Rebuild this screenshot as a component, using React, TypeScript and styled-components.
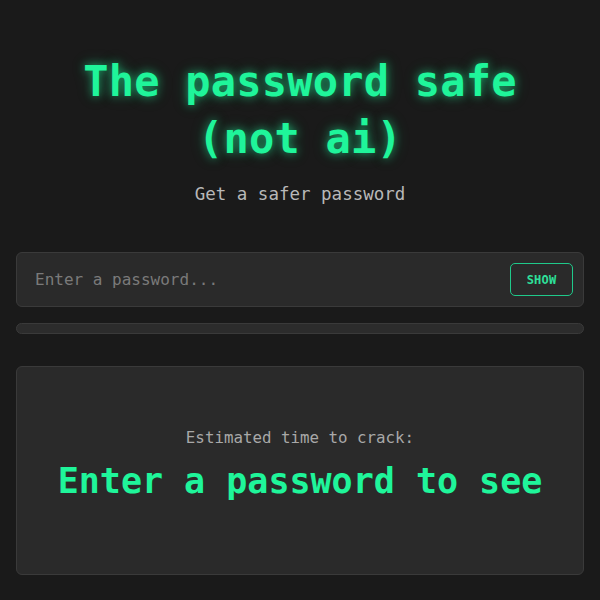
import React from "react";
import styled, { createGlobalStyle } from "styled-components";

const Global = createGlobalStyle`
  html, body { margin: 0; padding: 0; background: #1a1a1a; }
  body { font-family: "DejaVu Sans Mono", "Liberation Mono", monospace; }
  * { box-sizing: border-box; }
`;

const Page = styled.main`
  width: 600px;
  min-height: 600px;
  padding: 53px 16px 24px;
  display: flex;
  flex-direction: column;
`;

const Title = styled.h1`
  margin: 0;
  text-align: center;
  font-size: 42px;
  line-height: 57px;
  font-weight: bold;
  color: #1ff59a;
  text-shadow: 0 0 8px rgba(31, 245, 154, 0.55), 0 0 16px rgba(31, 245, 154, 0.25);
  letter-spacing: 0.2px;
`;

const Subtitle = styled.p`
  margin: 15px 0 0;
  text-align: center;
  font-size: 17.5px;
  line-height: 24px;
  color: #b8b8b8;
`;

const InputRow = styled.div`
  margin-top: 46px;
  height: 55px;
  display: flex;
  align-items: center;
  justify-content: space-between;
  padding: 0 10px 0 16px;
  background: #2a2a2a;
  border: 1px solid #3a3a3a;
  border-radius: 6px;
`;

const Input = styled.input`
  flex: 1;
  background: transparent;
  border: none;
  outline: none;
  font-family: inherit;
  font-size: 16px;
  color: #ddd;
  &::placeholder { color: #7a7a7a; }
`;

const ShowButton = styled.button`
  width: 63px;
  height: 33px;
  background: transparent;
  border: 1.5px solid #1fc98a;
  border-radius: 5px;
  color: #2ee09a;
  font-family: inherit;
  font-size: 12px;
  font-weight: bold;
  letter-spacing: 0.2px;
  cursor: pointer;
`;

const Meter = styled.div`
  margin-top: 16px;
  height: 11px;
  background: #2c2c2c;
  border: 1px solid #3a3a3a;
  border-radius: 6px;
`;

const ResultCard = styled.section`
  margin-top: 32px;
  height: 209px;
  padding-bottom: 12px;
  background: #2a2a2a;
  border: 1px solid #3a3a3a;
  border-radius: 6px;
  display: flex;
  flex-direction: column;
  align-items: center;
  justify-content: center;
  gap: 12px;
`;

const ResultLabel = styled.div`
  font-size: 15.8px;
  color: #a8a8a8;
  line-height: 20px;
`;

const ResultValue = styled.div`
  font-size: 35px;
  line-height: 42px;
  font-weight: bold;
  color: #1ff59a;
`;

export default function App() {
  return (
    <>
      <Global />
      <Page>
        <Title>
          The password safe
          <br />
          (not ai)
        </Title>
        <Subtitle>Get a safer password</Subtitle>
        <InputRow>
          <Input type="password" placeholder="Enter a password..." />
          <ShowButton>SHOW</ShowButton>
        </InputRow>
        <Meter />
        <ResultCard>
          <ResultLabel>Estimated time to crack:</ResultLabel>
          <ResultValue>Enter a password to see</ResultValue>
        </ResultCard>
      </Page>
    </>
  );
}
